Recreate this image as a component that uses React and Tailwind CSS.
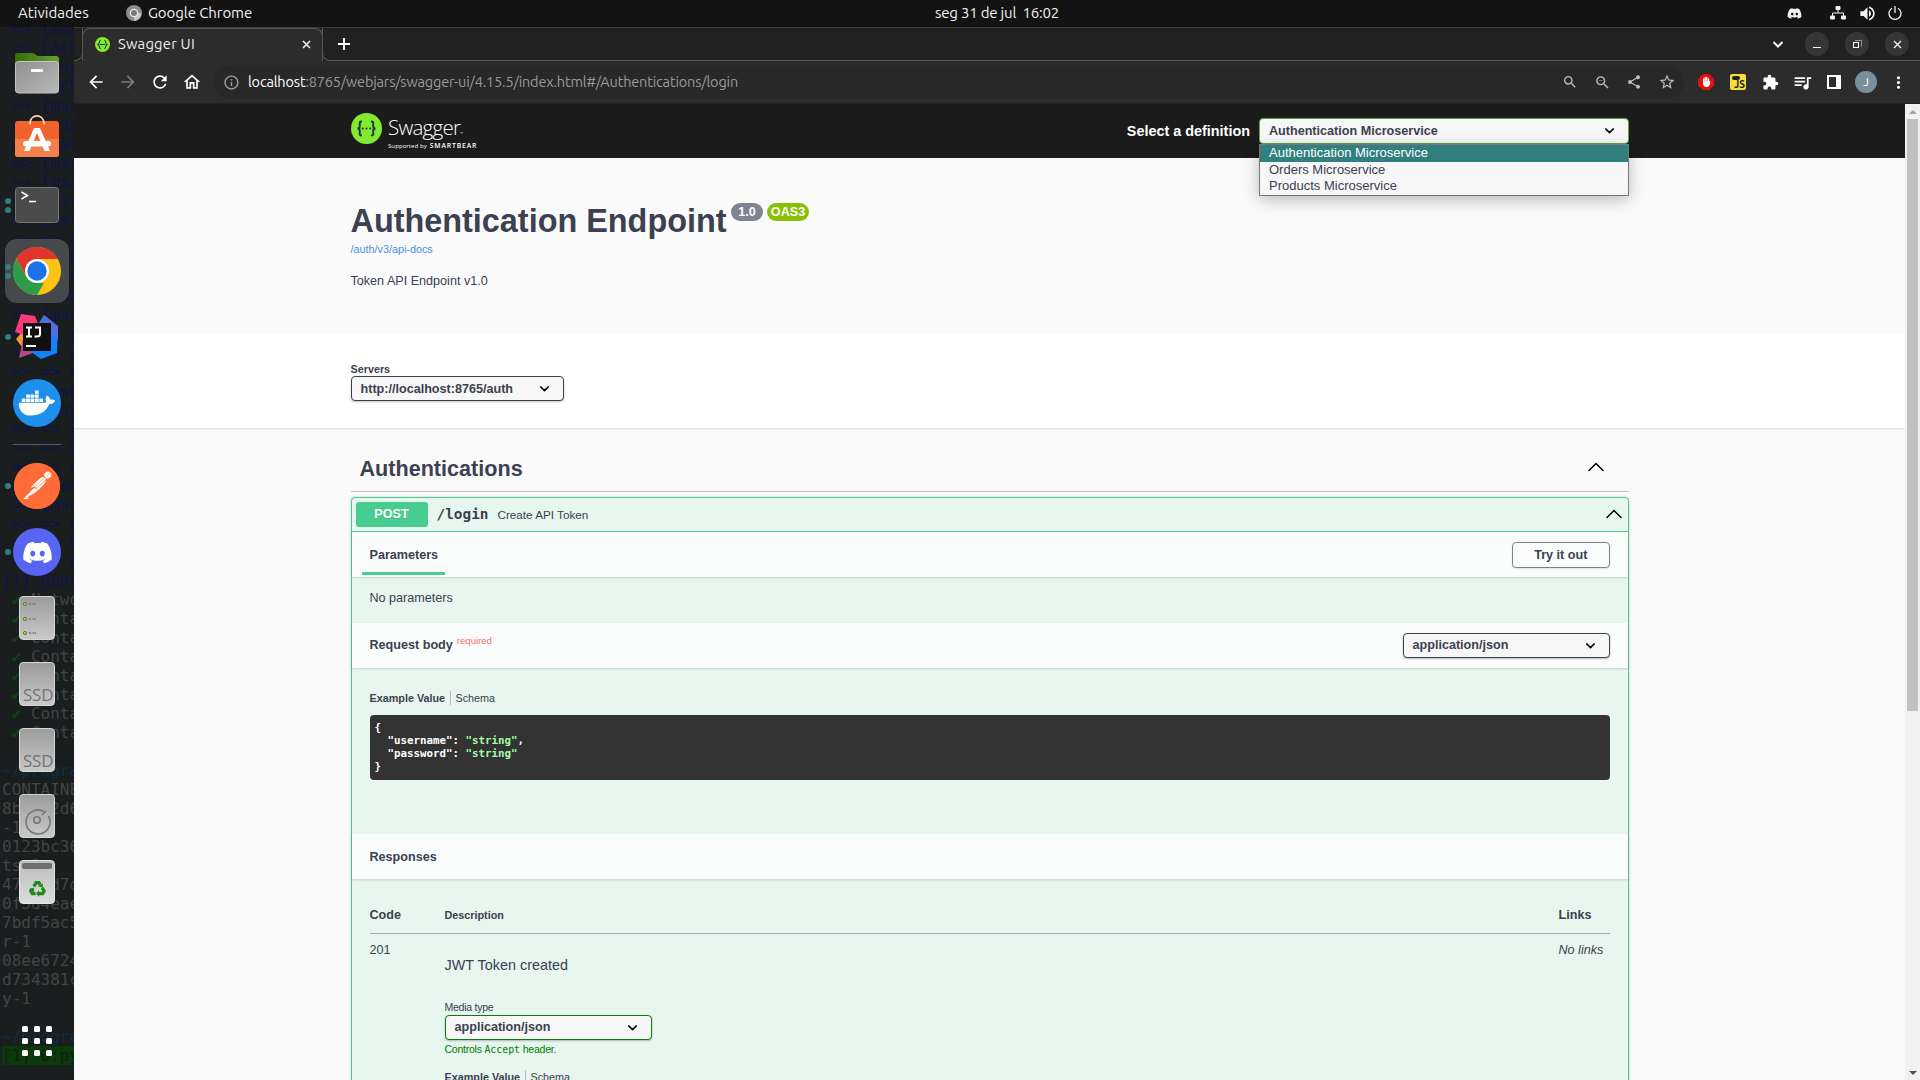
import React from "react";
import { FaDocker, FaDiscord, FaRecycle } from "react-icons/fa";
import { SiPostman } from "react-icons/si";
import {
  MdArrowBack, MdArrowForward, MdRefresh, MdOutlineHome, MdInfoOutline, MdSearch, MdZoomOut,
  MdShare, MdStarBorder, MdExtension, MdQueueMusic, MdMoreVert, MdVolumeUp,
} from "react-icons/md";

const UI = "font-['Ubuntu','Noto_Sans','Open_Sans',sans-serif]";
const MONO = "font-['DejaVu_Sans_Mono',monospace]";

const terminalLines = [
  " => [msg", " => CACH", " => [msp", " => CACH", " => [mso", " => [msp", " => [msc", " => [msc",
  " => [msa", " => [msc", " => [msc", " => => c", " => => w", " => => n", " => [msa", " => [msa",
  " => => c", " => => w", " => => n", " => [msp", " => [msp", " => => c", " => => w", " => => n",
  " => [mso", " => [mso", " => => n", " => => w", " => => n", "[+] Runn",
];
const idLines = [
  "CONTAINE", "8bce12d6", "-1", "0123bc36", "ts-1", "47c1bd7d", "0f3d4eae", "7bdf5ac5", "r-1", "08ee6724", "d734381c", "y-1",
];

function TerminalBackdrop() {
  return (
    <pre className={`absolute inset-x-0 -top-[7px] overflow-hidden pl-[2px] text-[16px] leading-[19px] text-[#424545] ${MONO}`} aria-hidden="true">
      {terminalLines.map((t, i) => <div key={i} className="h-[19px] text-[#12124a]">{t}</div>)}
      {["Netwo", "Conta", "Conta", "Conta", "Conta", "Conta", "Conta", "Conta"].map((t, i) => (
        <div key={i} className="h-[19px]"><span className="text-[#0b4510]"> ✔ </span>{t}</div>
      ))}
      <div className="h-[19px]" />
      <div className="h-[19px] text-[#0e2f4a]">~/progra</div>
      {idLines.map((t, i) => <div key={i} className="h-[19px]">{t}</div>)}
      <div className="h-[19px]" />
      <div className="h-[19px] text-[#0e2f4a]">~/progra</div>
      <div className="h-[19px] bg-[#0a3a0c] text-[#141a14]">[1] 0:py</div>
    </pre>
  );
}

const FilesIcon = () => (
  <svg width="48" height="48" viewBox="0 0 48 48">
    <defs>
      <linearGradient id="fg" x1="0" y1="0" x2="1" y2="1"><stop offset="0" stopColor="#8f8f8f" /><stop offset="1" stopColor="#b9b9b9" /></linearGradient>
      <linearGradient id="fgr" x1="0" x2="1"><stop offset="0" stopColor="#356d06" /><stop offset="1" stopColor="#6b9b3a" /></linearGradient>
    </defs>
    <path d="M2 7a3 3 0 0 1 3-3h15c2 0 3 3 5 3h18a3 3 0 0 1 3 3v12H2z" fill="url(#fgr)" />
    <rect x="2.500" y="12.500" width="43" height="31.500" rx="3" fill="url(#fg)" stroke="#c4c4c4" />
    <rect x="18" y="20" width="12" height="3" rx="1" fill="#fff" />
  </svg>
);
const SoftwareIcon = () => (
  <svg width="48" height="48" viewBox="0 0 48 48">
    <rect x="2" y="7" width="44" height="36" rx="3" fill="#f4622b" />
    <path d="M2 25h44v15a3 3 0 0 1-3 3H5a3 3 0 0 1-3-3z" fill="#f27f4c" />
    <path d="M17 10.500V9C18-.5 30-.5 31 9v1.500" fill="none" stroke="#f3dfb4" strokeWidth="1.700" />
    <path d="M21 14h6l10 23h-5.500L24 19l-7.500 18H11z" fill="#fff" />
    <rect x="10" y="27" width="28" height="5.500" rx="2.700" fill="#fff" />
  </svg>
);
const TerminalIcon = () => (
  <svg width="48" height="48" viewBox="0 0 48 48">
    <rect x="2.500" y="6.500" width="43" height="35" rx="3" fill="#4b4b4b" stroke="#777" />
    <path d="M8.500 11l6 3.500-6 3.500M16 20.500h7" fill="none" stroke="#fff" strokeWidth="1.500" />
  </svg>
);
const ChromeIcon = () => (
  <svg width="48" height="48" viewBox="0 0 48 48">
    <circle cx="24" cy="24" r="24" fill="#fdc315" />
    <path d="M3.200 12A24 24 0 0 1 44.800 12H24L13.600 30z" fill="#e0352b" />
    <path d="M3.200 12L13.600 30 24 36 31 36 24 48A24 24 0 0 1 3.200 12z" fill="#2d9c48" />
    <circle cx="24" cy="24" r="12" fill="#fff" /><circle cx="24" cy="24" r="9.700" fill="#1a73e8" />
  </svg>
);
const IdeaIcon = () => (
  <svg width="48" height="48" viewBox="0 0 48 48">
    <path d="M10 18L3 26l9 12 10-16z" fill="#f59a35" />
    <path d="M8 1l14 2 5 13-16 6-9-3z" fill="#fc3a78" />
    <path d="M10 26l14 8-4 6-14 5z" fill="#b04a86" />
    <path d="M31 2l14 12-1 26L28 46 14 36 26 12z" fill="#1482fb" />
    <path d="M31 2l14 11v14L30 14 22 16z" fill="#4f6fe0" />
    <rect x="10" y="10" width="28" height="28" fill="#101010" />
    <path d="M13 14.500h6M16 14v10M13 23.500h6M22 14.500h5v6.500q0 2.500-3 2.500h-2.500" fill="none" stroke="#fff" strokeWidth="2" />
    <path d="M13 33h10" stroke="#fff" strokeWidth="2" />
  </svg>
);
const DockerIcon = () => (
  <div className="flex size-12 items-center justify-center rounded-full bg-[#1d90ed] text-white"><FaDocker size={36} /></div>
);
const PostmanIcon = () => (
  <div className="flex size-[46px] items-center justify-center rounded-full bg-[radial-gradient(#fff_65%,#ff6c37_66%)]"><SiPostman size={46} color="#ff6c37" /></div>
);
const DiscordIcon = () => (
  <div className="flex size-12 items-center justify-center rounded-full bg-[#5865f2] text-white"><FaDiscord size={31} /></div>
);
const DriveShell = ({ children }) => (
  <div className="h-11 w-9 overflow-hidden rounded-[4px] border border-[#d6d6d6] bg-linear-to-b from-[#9c9c9c] to-[#c9c9c9]">{children}</div>
);
const ServerIcon = () => (
  <DriveShell>
    <svg width="34" height="42" viewBox="0 0 34 42">
      {[7, 22, 36].map((y) => (
        <g key={y}>
          <circle cx="5" cy={y} r="1.600" fill="#b8d25c" stroke="#667030" />
          <path d={`M9 ${y}h2M12.500 ${y}h2M15 ${y}h1`} stroke="#777" strokeWidth="1.500" />
        </g>
      ))}
    </svg>
  </DriveShell>
);
const SsdIcon = () => (
  <DriveShell><div className="pt-[22px] pl-[3px] font-['Open_Sans','Noto_Sans',sans-serif] text-[17px] leading-5 tracking-[-0.200px] text-[#747474]">SSD</div></DriveShell>
);
const DiskIcon = () => (
  <DriveShell>
    <svg width="34" height="42" viewBox="0 0 34 42" fill="none" stroke="#777" strokeWidth="1.600">
      <path d="M24 16.500A12 12 0 1 0 28.500 21" /><circle cx="17" cy="25" r="3.200" /><path d="M22 20l4-4" />
    </svg>
  </DriveShell>
);
const TrashIcon = () => (
  <div className="flex h-11 w-9 flex-col items-center rounded-[4px] border border-[#e5e5e5] bg-linear-to-b from-[#bdbdbd] to-[#dcdcdc] pt-[2px]">
    <div className="h-[6px] w-[30px] rounded-[2px] bg-[#6f6f6f]" />
    <svg className="mt-2.5" width="19" height="19" viewBox="0 0 24 24" fill="none" stroke="#1e8a1e" strokeWidth="4.200">
      <path d="M7.500 9.500L10.200 4.500h3.600l1.700 3M18 11l2.300 4.200-1.800 3.300h-5M9.500 18.500h-4l-1.800-3.200 1.500-2.800" />
      <path d="M12.500 9.300l6.300-3.600v5.500zM14 14v8.500l-4-4zM1 13.300l6.500-2.500.5 5.500z" fill="#1e8a1e" stroke="none" />
    </svg>
  </div>
);

function DockItem({ dots = 0, active, children }) {
  return (
    <div className="relative flex h-[66px] w-full items-center justify-center">
      {active && <div className="absolute inset-x-[5px] inset-y-px rounded-[12px] bg-[#5a5c5c]/70" />}
      <div className="absolute left-[5px] flex flex-col gap-[3px]">
        {Array.from({ length: dots }, (_, i) => <span key={i} className="size-[6px] rounded-full bg-[#31807f]" />)}
      </div>
      <div className="relative">{children}</div>
    </div>
  );
}

function Dock() {
  return (
    <aside className="relative flex w-[74px] shrink-0 flex-col overflow-hidden bg-[#1a1e1e]">
      <TerminalBackdrop />
      <div className="relative flex flex-1 flex-col pt-[13px]">
        <DockItem><FilesIcon /></DockItem>
        <DockItem><div className="pb-[2px]"><SoftwareIcon /></div></DockItem>
        <DockItem dots={2}><TerminalIcon /></DockItem>
        <DockItem dots={2} active><ChromeIcon /></DockItem>
        <DockItem dots={1}><IdeaIcon /></DockItem>
        <DockItem><DockerIcon /></DockItem>
        <div className="flex h-[17px] items-center justify-center"><div className="h-px w-12 bg-[#5a5d5d]" /></div>
        <DockItem dots={1}><PostmanIcon /></DockItem>
        <DockItem dots={1}><DiscordIcon /></DockItem>
        <DockItem><ServerIcon /></DockItem>
        <DockItem><SsdIcon /></DockItem>
        <DockItem><SsdIcon /></DockItem>
        <DockItem><DiskIcon /></DockItem>
        <DockItem><TrashIcon /></DockItem>
        <div className="mt-auto mb-6 grid grid-cols-3 gap-[6px] self-center">
          {Array.from({ length: 9 }, (_, i) => <span key={i} className="size-[6px] rounded-[1.500px] bg-white" />)}
        </div>
      </div>
    </aside>
  );
}

function SystemBar() {
  return (
    <header className={`flex h-[27px] shrink-0 items-center bg-[#131313] text-[15px] leading-[22px] text-[#f2f2f2] ${UI}`}>
      <div className="grid flex-1 grid-cols-[1fr_auto_1fr] items-center pb-px">
        <div className="flex items-center pl-[18px]">
          <span className="w-[108px] tracking-[0.040px]">Atividades</span>
          <svg width="16" height="16" viewBox="0 0 16 16">
            <circle cx="8" cy="8" r="8" fill="#8d8d8d" /><path d="M8 8h7.500A8 8 0 0 1 8 16z" fill="#c9c9c9" />
            <circle cx="8" cy="8" r="4.300" fill="#eee" /><circle cx="8" cy="8" r="3" fill="#777" />
          </svg>
          <span className="ml-1.5 tracking-[-0.080px]">Google Chrome</span>
        </div>
        <span className="relative left-[37px] whitespace-pre tracking-[-0.200px]">seg 31 de jul  16:02</span>
        <div className="flex items-center justify-end pr-[18px]">
          <FaDiscord size={15} className="mr-[28px]" />
          <svg width="16" height="14" viewBox="0 0 16 14" className="mr-[12px]" fill="#f2f2f2">
            <rect x="5.500" width="5" height="4" rx="1" /><rect y="9.500" width="5" height="4" rx="1" /><rect x="11" y="9.500" width="5" height="4" rx="1" />
            <path d="M8 4v3M2.500 10V7h11v3" fill="none" stroke="#f2f2f2" />
          </svg>
          <MdVolumeUp size={19} className="mr-[11px]" />
          <svg width="14" height="14" viewBox="0 0 14 14" fill="none" stroke="#f2f2f2" strokeWidth="1.300"><path d="M4 2.200a6 6 0 1 0 6 0M7 0v7" /></svg>
        </div>
      </div>
    </header>
  );
}

const SwaggerFavicon = () => (
  <svg width="15" height="15" viewBox="0 0 32 32">
    <circle cx="16" cy="16" r="16" fill="#85ea2d" />
    <path d="M12 7c-4 0-2 8-5 9 3 1 1 9 5 9M20 7c4 0 2 8 5 9-3 1-1 9-5 9M11 16h10" fill="none" stroke="#173647" strokeWidth="2.400" />
  </svg>
);

function WindowButton({ children, last }) {
  return <div className={`flex size-6 items-center justify-center rounded-full bg-[#353535] ${last ? "mr-[11px]" : "mr-4"}`}>{children}</div>;
}

function TabStrip() {
  return (
    <div className={`flex h-[34px] shrink-0 border-t border-[#3a3a3a] bg-[#212121] ${UI}`}>
      <div className="w-[9px] rounded-br-[8px] border-r border-b border-[#585858]" />
      <div className="-ml-px flex w-[241px] items-center rounded-t-[8px] border-t border-x border-[#585858] bg-[#2c2c2c] pr-[11px] pb-[2px] pl-[12px]">
        <SwaggerFavicon />
        <span className="ml-[8px] flex-1 text-[14.800px] leading-[22px] tracking-[0.200px] text-[#ececec]">Swagger UI</span>
        <svg width="9" height="9" viewBox="0 0 9 9" stroke="#eee" strokeWidth="1.600"><path d="M1 1l7 7M8 1L1 8" /></svg>
      </div>
      <div className="-ml-px flex flex-1 items-center rounded-bl-[8px] border-b border-l border-[#585858]">
        <svg className="ml-[15px]" width="12" height="12" viewBox="0 0 12 12" stroke="#fff" strokeWidth="2"><path d="M6 0v12M0 6h12" /></svg>
        <svg className="mr-[22px] ml-auto" width="10" height="7" viewBox="0 0 10 7" fill="none" stroke="#eee" strokeWidth="2"><path d="M.5 1L5 5.500 9.500 1" /></svg>
        <WindowButton><div className="mt-1.5 h-px w-2 bg-white" /></WindowButton>
        <WindowButton>
          <svg width="9" height="9" viewBox="0 0 9 9" fill="none"><path d="M2 .5h6.500v6" stroke="#999" /><rect x=".5" y="2.500" width="5" height="5" stroke="#fff" /></svg>
        </WindowButton>
        <WindowButton last><svg width="9" height="9" viewBox="0 0 9 9" stroke="#eee" strokeWidth="1.400"><path d="M1 1l7 7M8 1L1 8" /></svg></WindowButton>
      </div>
    </div>
  );
}

function Toolbar() {
  return (
    <div className={`flex h-[42px] shrink-0 items-center bg-[#2c2c2c] text-white ${UI}`}>
      <div className="flex w-[139px] items-center gap-[12px] pl-[12px]">
        <MdArrowBack size={20} /><MdArrowForward size={20} className="text-[#7c7c7c]" /><MdRefresh size={20} /><MdOutlineHome size={20} />
      </div>
      <div className="flex h-[34px] w-[1471px] items-center rounded-full bg-[#282828] pl-[10px] text-[#bdbdbd]">
        <MdInfoOutline size={17} className="text-[#9aa0a6]" />
        <span className="ml-[8px] flex-1 text-[14.500px] tracking-[-0.175px] text-[#9a9a9a]"><span className="text-white">localhost</span>:8765/webjars/swagger-ui/4.15.5/index.html#/Authentications/login</span>
        <MdSearch size={16} className="mr-4" /><MdZoomOut size={17} className="mr-[15px]" /><MdShare size={16} className="mr-4" /><MdStarBorder size={18} className="mr-[8px]" />
      </div>
      <div className="ml-[14px] flex items-center">
        <svg width="16" height="16" viewBox="0 0 16 16">
          <path d="M4.700 0h6.600L16 4.700v6.600L11.300 16H4.700L0 11.300V4.700z" fill="#e0100f" />
          <path d="M5.600 8V4.800M7.200 8V3.500M8.800 8V3.500M10.400 8V4.800" stroke="#fff" strokeWidth="1.300" strokeLinecap="round" />
          <path d="M5 7.500h6l1.200-1v3q-1 3.500-3.500 3.500Q5 13 5 9z" fill="#fff" />
        </svg>
        <div className="relative ml-4 flex size-4 items-end justify-end rounded-[2px] bg-[#f5dc3c] pr-px text-[10px] leading-[11px] font-bold text-[#222]">
          <span className="absolute top-[2px] left-[2px] h-1 w-2 rounded-full bg-[#222]" />JS
        </div>
        <MdExtension size={17} className="ml-4" />
        <MdQueueMusic size={21} className="ml-[13px]" />
        <div className="ml-[14px] h-[14px] w-[14px] border-y-2 border-l-2 border-r-[5px] border-white" />
        <div className="ml-[14px] flex size-[22px] items-center justify-center rounded-full bg-[#78909c] text-[12px] text-white">J</div>
        <MdMoreVert size={19} className="ml-[12px]" />
      </div>
    </div>
  );
}

const Arrow = ({ className = "" }) => (
  <svg className={className} width="9" height="6" viewBox="0 0 9 6" fill="none" stroke="#000" strokeWidth="1.500"><path d="M.7.900L4.500 4.600 8.300.900" strokeLinecap="round" strokeLinejoin="round" /></svg>
);
const Collapse = ({ className = "" }) => (
  <svg className={className} width="16" height="10" viewBox="0 0 16 10" fill="none" stroke="#000" strokeWidth="1.500"><path d="M1 8.500l7-7 7 7" strokeLinecap="round" strokeLinejoin="round" /></svg>
);

function Select({ label, className, labelClass = "pb-px" }) {
  return (
    <div className={`flex items-center justify-between rounded-[4px] border bg-[#f7f7f7] pr-[14px] pl-[9px] text-[12.600px] leading-[23px] font-bold text-[#3b4151] ${className}`}>
      <span className={labelClass}>{label}</span><Arrow />
    </div>
  );
}

function SwaggerHeader() {
  return (
    <div className="flex h-[54px] items-start justify-between bg-[#1b1b1b] pr-[276px] pl-[277px]">
      <div className="flex pt-[9px]">
        <svg width="31" height="31" viewBox="0 0 31 31">
          <circle cx="15.500" cy="15.500" r="15.500" fill="#85ea2d" />
          <path d="M11 8.500c-3.500 0-2 2-2.200 4.500 0 1.500-.8 2.500-2.300 2.500 1.500 0 2.300 1 2.300 2.500C9 20.500 7.500 22.500 11 22.500M20 8.500c3.500 0 2 2 2.200 4.500 0 1.500.8 2.500 2.300 2.500-1.500 0-2.300 1-2.300 2.500-.2 2.500 1.300 4.500-2.200 4.500" fill="none" stroke="#173647" strokeWidth="1.900" />
          <g fill="#173647"><circle cx="11.700" cy="15.500" r="1.100" /><circle cx="15.500" cy="15.500" r="1.100" /><circle cx="19.300" cy="15.500" r="1.100" /></g>
        </svg>
        <div className="ml-[6px] pt-[2px] font-['Open_Sans',sans-serif] text-white">
          <div className="h-[26px] text-[20.500px] leading-[25px] font-light tracking-[-0.750px]">Swagger<span className="text-[4px]">™</span></div>
          <div className="flex h-[9px] items-baseline gap-[3px] leading-[9px]">
            <span className="text-[6px] tracking-[0.080px]">Supported by</span>
            <span className="text-[6.800px] font-semibold tracking-[0.850px]">SMARTBEAR</span>
          </div>
        </div>
      </div>
      <div className="flex pt-[14px]">
        <span className="mr-[9px] text-[14.400px] leading-[26px] font-bold text-white">Select a definition</span>
        <div className="relative w-[370px]">
          <Select label="Authentication Microservice" labelClass="pt-px" className="h-[26px] border-[#62a03f]" />
          <div className="absolute top-[26px] left-0 z-10 h-[52px] w-full border border-[#767676] bg-[#f7f7f7] text-[13px] text-[#3b4151] shadow-[0_4px_14px_rgba(0,0,0,0.250)]">
            <div className="h-[17px] bg-[#308080] pl-[9px] leading-[16px] text-white">Authentication Microservice</div>
            <div className="h-[16px] pl-[9px] leading-[16px]">Orders Microservice</div>
            <div className="h-[16px] pl-[9px] leading-[16px]">Products Microservice</div>
          </div>
        </div>
      </div>
    </div>
  );
}

const SectionBar = ({ children, className = "" }) => (
  <div className={`flex items-center justify-between bg-white/80 pr-[18px] pl-[18px] text-[12.600px] font-bold shadow-[0_1px_2px_rgba(0,0,0,0.150)] ${className}`}>{children}</div>
);

const ExampleTabs = () => (
  <div className="flex h-[14px] items-center text-[10.800px] leading-[14px]">
    <span className="w-20 whitespace-nowrap font-bold">Example Value</span><span className="border-l border-[#3b4151]/30 pl-[5px]">Schema</span>
  </div>
);

function Operation() {
  return (
    <div className="mt-[5px] h-[640px] rounded-[4px] border border-[#49cc90] bg-[#e7f6ee] shadow-[0_0_3px_rgba(0,0,0,0.190)]">
      <div className="flex h-[34px] items-center border-b border-[#49cc90] pr-[6px] pl-1">
        <span className="h-[25px] w-[72px] rounded-[3px] bg-[#49cc90] text-center text-[12.600px] leading-[25px] font-bold text-white [text-shadow:0_1px_0_rgba(0,0,0,0.100)]">POST</span>
        <span className={`ml-[9px] w-[61px] text-[14.400px] leading-[33px] font-bold ${MONO}`}>/login</span>
        <span className="flex-1 text-[11.700px] leading-[33px]">Create API Token</span>
        <Collapse className="mb-px" />
      </div>
      <SectionBar className="h-[45px]">
        <div className="relative -ml-2 h-full w-[83px] pl-2 leading-[47px]">Parameters<div className="absolute bottom-[2px] left-[0.500px] h-[3px] w-full bg-[#49cc90]" /></div>
        <div className="h-[26px] w-[97.500px] rounded-[4px] border border-[#808080] text-center leading-[24px] shadow-[0_1px_2px_rgba(0,0,0,0.100)]">Try it out</div>
      </SectionBar>
      <div className="h-[46px] pl-[18px] text-[12.600px] leading-[43px]">No parameters</div>
      <SectionBar className="h-[45px]">
        <div className="flex"><span>Request body</span><span className="ml-[4px] -mt-[2px] text-[9.700px] font-normal tracking-[-0.050px] text-[#ff0000]/60">required</span></div>
        <Select label="application/json" className="h-[25px] w-[207px] border-[#3b4151] shadow-[0_1px_2px_rgba(0,0,0,0.250)]" />
      </SectionBar>
      <div className="h-[166px] px-[18px] pt-[23px]">
        <ExampleTabs />
        <pre className={`mt-[10px] h-[65px] rounded-[4px] bg-[#333] px-[5px] py-[6px] text-[10.800px] leading-[13px] font-bold text-white ${MONO}`}>
          {"{\n  \"username\": "}<span className="text-[#a2fca2]">"string"</span>{",\n  \"password\": "}<span className="text-[#a2fca2]">"string"</span>{"\n}"}
        </pre>
      </div>
      <SectionBar className="h-[45px]"><span className="pt-[2px]">Responses</span></SectionBar>
      <div className="px-[18px] pt-[25px]">
        <div className="flex h-[30px] border-b border-[#3b4151]/40 text-[12.600px] leading-[22px] font-bold">
          <span className="w-[75px]">Code</span><span className="flex-1 text-[10.800px] leading-[23px]">Description</span><span className="w-[51px]">Links</span>
        </div>
        <div className="flex text-[12.600px]">
          <span className="w-[75px] pt-[8px] leading-[16px]">201</span>
          <div className="flex-1 pt-[22px]">
            <div className="h-[44px] text-[14.400px] leading-[18px]">JWT Token created</div>
            <div className="h-[15px] text-[10.600px] leading-[15px] tracking-[-0.300px]">Media type</div>
            <Select label="application/json" className="h-[25px] w-[207px] border-[#0a7d0a] shadow-[0_1px_2px_rgba(0,0,0,0.250)]" />
            <div className="mt-[3px] h-[27px] text-[10.600px] leading-[13px] tracking-[-0.280px] text-[#008000]">Controls <span className={`text-[9.900px] tracking-normal ${MONO}`}>Accept</span> header.</div>
            <ExampleTabs />
          </div>
          <span className="w-[51px] pt-[8px] leading-[16px] italic">No links</span>
        </div>
      </div>
    </div>
  );
}

function Page() {
  return (
    <main className="relative flex h-[977px] overflow-hidden border-t border-[#232323] bg-[#fafafa] font-['Liberation_Sans',Arial,sans-serif] text-[#3b4151]">
      <div className="w-[1831px]">
        <SwaggerHeader />
        <section className="h-[175px] pt-[42px] pl-[276.500px]">
          <div className="flex h-[42px] items-start">
            <h1 className="w-[380.500px] whitespace-nowrap text-[32.400px] leading-[42px] font-bold">Authentication Endpoint</h1>
            <span className="mt-[3px] h-[18px] w-8 rounded-full bg-[#7d8492] text-center text-[12.600px] leading-[18px] font-bold text-white">1.0</span>
            <span className="mt-[3px] ml-1 h-[18px] w-[42px] rounded-full bg-[#89bf04] text-center text-[12.600px] leading-[18px] font-bold text-white">OAS3</span>
          </div>
          <div className="text-[10.800px] leading-[14px] text-[#4990e2]">/auth/v3/api-docs</div>
          <p className="mt-[17px] text-[12.600px] leading-[16px]">Token API Endpoint v1.0</p>
        </section>
        <section className="h-[95px] bg-white pt-[29px] pl-[276.500px] shadow-[0_1px_2px_rgba(0,0,0,0.150)]">
          <div className="h-[14px] text-[10.800px] leading-[14px] font-bold">Servers</div>
          <Select label="http://localhost:8765/auth" labelClass="pt-px" className="h-[25px] w-[213px] border-[#3b4151] shadow-[0_1px_2px_rgba(0,0,0,0.250)]" />
        </section>
        <section className="pt-[18px] pr-[276.500px] pl-[276.500px]">
          <div className="flex h-[46px] items-center justify-between border-b border-[#3b4151]/30 pr-[25px] pl-[9px]">
            <h2 className="text-[21.600px] leading-[45px] font-bold">Authentications</h2>
            <Collapse className="mb-[4px]" />
          </div>
          <Operation />
        </section>
      </div>
      <div className="flex w-[15px] flex-col items-center bg-[#f1f1f1]">
        <div className="flex h-[15px] items-center"><div className="border-x-4 border-b-4 border-x-transparent border-b-[#a3a3a3]" /></div>
        <div className="h-[592px] w-[11px] bg-[#c1c1c1]" />
        <div className="mt-auto flex h-[15px] items-center"><div className="border-x-4 border-t-4 border-x-transparent border-t-[#505050]" /></div>
      </div>
    </main>
  );
}

export default function App() {
  return (
    <div className="flex h-[1080px] w-[1920px] flex-col overflow-hidden bg-black">
      <SystemBar />
      <div className="flex min-h-0 flex-1">
        <Dock />
        <div className="flex w-[1846px] flex-col">
          <TabStrip />
          <Toolbar />
          <Page />
        </div>
      </div>
    </div>
  );
}
